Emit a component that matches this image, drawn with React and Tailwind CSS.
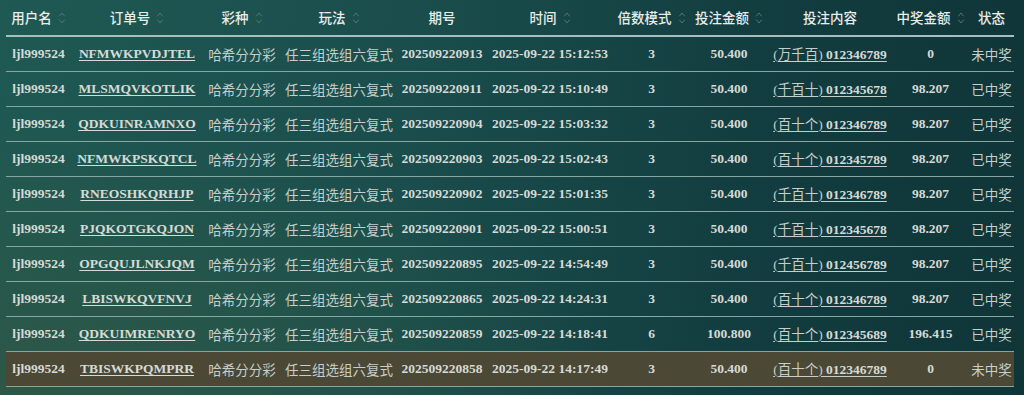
import React from "react";

const rows = [
  ["NFMWKPVDJTEL", "202509220913", "2025-09-22 15:12:53", "3", "50.400", "万千百", "012346789", "0", "未中奖"],
  ["MLSMQVKOTLIK", "202509220911", "2025-09-22 15:10:49", "3", "50.400", "千百十", "012345678", "98.207", "已中奖"],
  ["QDKUINRAMNXO", "202509220904", "2025-09-22 15:03:32", "3", "50.400", "百十个", "012346789", "98.207", "已中奖"],
  ["NFMWKPSKQTCL", "202509220903", "2025-09-22 15:02:43", "3", "50.400", "百十个", "012345789", "98.207", "已中奖"],
  ["RNEOSHKQRHJP", "202509220902", "2025-09-22 15:01:35", "3", "50.400", "千百十", "012346789", "98.207", "已中奖"],
  ["PJQKOTGKQJON", "202509220901", "2025-09-22 15:00:51", "3", "50.400", "千百十", "012345678", "98.207", "已中奖"],
  ["OPGQUJLNKJQM", "202509220895", "2025-09-22 14:54:49", "3", "50.400", "千百十", "012456789", "98.207", "已中奖"],
  ["LBISWKQVFNVJ", "202509220865", "2025-09-22 14:24:31", "3", "50.400", "百十个", "012346789", "98.207", "已中奖"],
  ["QDKUIMRENRYO", "202509220859", "2025-09-22 14:18:41", "6", "100.800", "百十个", "012345689", "196.415", "已中奖"],
  ["TBISWKPQMPRR", "202509220858", "2025-09-22 14:17:49", "3", "50.400", "百十个", "012346789", "0", "未中奖"],
];

const grid =
  "grid grid-cols-[65px_132px_78px_116px_90px_126px_77px_78px_124px_77px_45px] items-center text-center whitespace-nowrap";

const serif = "font-['Liberation_Serif','Noto_Sans_CJK_SC',serif] font-bold text-[13.5px]";
const cjk = "font-['Noto_Sans_CJK_SC','Noto_Sans',sans-serif] font-normal text-[13.5px] text-[#c6cecb]";

function SortIcon() {
  return (
    <svg width="8" height="16" viewBox="0 0 8 16" className="ml-[6px] shrink-0" fill="none" stroke="#55766f" strokeWidth="1" strokeLinecap="round" strokeLinejoin="round">
      <path d="M1.5 6 L4 3 L6.5 6" />
      <path d="M1.5 10 L4 13 L6.5 10" />
    </svg>
  );
}

function H({ children, sort }) {
  return (
    <div className="flex items-center justify-center text-[13.5px] font-medium text-[#e8ecea] font-['Noto_Sans_CJK_SC','Noto_Sans',sans-serif]">
      <span>{children}</span>
      {sort && <SortIcon />}
    </div>
  );
}

export default function App() {
  return (
    <div className="w-[1024px] h-[395px] overflow-hidden bg-[radial-gradient(ellipse_60%_70%_at_0%_100%,#2d5746_0%,rgba(45,87,70,0)_100%),linear-gradient(95deg,#1f5953_0%,#1a4d4c_40%,#123c3f_75%,#0f3537_100%)]">
      <div className="ml-[6px] w-[1008px]">
        <div className={`${grid} h-[37px] border-b-2 border-[#a7bfbb]`}>
          <H sort>用户名</H>
          <H sort>订单号</H>
          <H sort>彩种</H>
          <H sort>玩法</H>
          <H>期号</H>
          <H sort>时间</H>
          <H sort>倍数模式</H>
          <H sort>投注金额</H>
          <H>投注内容</H>
          <H sort>中奖金额</H>
          <H>状态</H>
        </div>
        {rows.map((r, i) => (
          <div
            key={i}
            className={`${grid} h-[35px] border-b border-[#86a7a1] text-[#d6dad6] ${i === rows.length - 1 ? "bg-[#4b4835]" : ""}`}
          >
            <div className={serif}>ljl999524</div>
            <div className={`${serif} underline underline-offset-2`}>{r[0]}</div>
            <div className={cjk}>哈希分分彩</div>
            <div className={cjk}>任三组选组六复式</div>
            <div className={serif}>{r[1]}</div>
            <div className={serif}>{r[2]}</div>
            <div className={serif}>{r[3]}</div>
            <div className={serif}>{r[4]}</div>
            <div className="text-[13.5px] underline underline-offset-2 decoration-[#c6cecb]">
              <span className="font-['Liberation_Serif',serif] font-normal text-[#c6cecb]">(</span>
              <span className={cjk}>{r[5]}</span>
              <span className="font-['Liberation_Serif',serif] font-normal text-[#c6cecb]">) </span>
              <span className="font-['Liberation_Serif',serif] font-bold">{r[6]}</span>
            </div>
            <div className={serif}>{r[7]}</div>
            <div className={cjk}>{r[8]}</div>
          </div>
        ))}
      </div>
    </div>
  );
}
